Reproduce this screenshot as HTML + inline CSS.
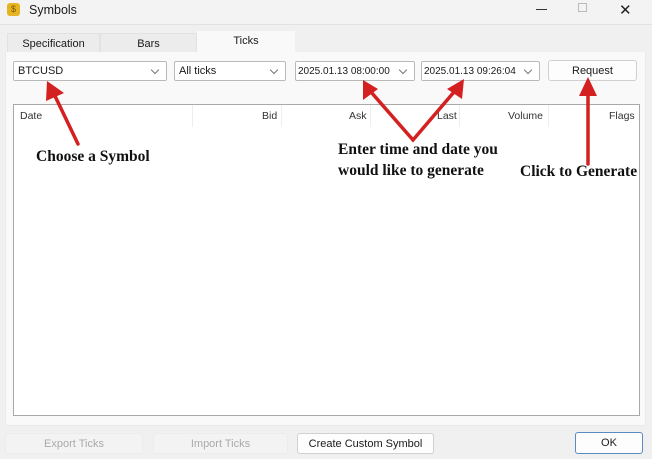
<!DOCTYPE html>
<html><head><meta charset="utf-8"><style>
*{margin:0;padding:0;box-sizing:border-box}
body{width:652px;height:459px;background:#f0f0f0;font-family:"Liberation Sans",sans-serif;font-size:11px;color:#1a1a1a;position:relative;overflow:hidden}
.a{position:absolute}
.combo{position:absolute;top:61px;height:20px;background:#fff;border:1px solid #b9b9b9;border-radius:2px;padding:3px 0 0 4px;font-size:11px}
.combo:after{content:"";position:absolute;right:8px;top:5px;width:5px;height:5px;border-right:1px solid #777;border-bottom:1px solid #777;transform:rotate(45deg)}
.dt{font-size:10px;padding:4px 0 0 2px}
.btn{position:absolute;height:21px;border:1px solid #d0d0d0;border-radius:3px;background:#fdfdfd;text-align:center;padding-top:4px;font-size:11px}
.hd{position:absolute;top:110px;font-size:10.5px;color:#333}
.sep{position:absolute;top:105px;width:1px;height:22px;background:#eee}
.note{position:absolute;font-family:"Liberation Serif",serif;font-weight:bold;font-size:15.5px;color:#111;line-height:21px}
</style></head><body>
<div class="a" style="left:0;top:0;width:652px;height:25px;background:#f3f3f3;border-bottom:1px solid #e2e2e2"></div>
<div class="a" style="left:7px;top:3px;width:13px;height:13px;background:#e6b422;border-radius:3px;color:#7a5800;font-size:9px;text-align:center;line-height:13px">$</div>
<div class="a" style="left:29px;top:3px;font-size:12.5px">Symbols</div>
<div class="a" style="left:536px;top:9px;width:11px;height:1px;background:#333"></div>
<div class="a" style="left:578px;top:3px;width:9px;height:9px;border:1px solid #bbb"></div>
<div class="a" style="left:619px;top:1px;font-size:15px;color:#222">✕</div>
<div class="a" style="left:7px;top:33px;width:93px;height:20px;background:#ececec;border:1px solid #e2e2e2;text-align:center;padding-top:4px">Specification</div>
<div class="a" style="left:100px;top:33px;width:97px;height:20px;background:#ececec;border:1px solid #e2e2e2;text-align:center;padding-top:4px">Bars</div>
<div class="a" style="left:197px;top:31px;width:98px;height:22px;background:#f9f9f9;text-align:center;padding-top:4px">Ticks</div>
<div class="a" style="left:5px;top:52px;width:641px;height:374px;background:#f9f9f9;border:1px solid #eaeaea;border-top:none"></div>
<div class="combo" style="left:13px;width:154px">BTCUSD</div>
<div class="combo" style="left:174px;width:112px">All ticks</div>
<div class="combo dt" style="left:295px;width:120px">2025.01.13 08:00:00</div>
<div class="combo dt" style="left:421px;width:119px">2025.01.13 09:26:04</div>
<div class="btn" style="left:548px;top:60px;width:89px;height:21px">Request</div>
<div class="a" style="left:13px;top:104px;width:627px;height:312px;background:#fff;border:1px solid #a9a9a9"></div>
<div class="hd" style="left:20px">Date</div>
<div class="sep" style="left:192px"></div>
<div class="hd" style="left:262px">Bid</div>
<div class="sep" style="left:281px"></div>
<div class="hd" style="left:349px">Ask</div>
<div class="sep" style="left:370px"></div>
<div class="hd" style="left:437px">Last</div>
<div class="sep" style="left:459px"></div>
<div class="hd" style="left:508px">Volume</div>
<div class="sep" style="left:548px"></div>
<div class="hd" style="left:609px">Flags</div>
<div class="btn" style="left:5px;top:433px;width:138px;color:#aaa;background:#f3f3f3;border-color:#ececec">Export Ticks</div>
<div class="btn" style="left:153px;top:433px;width:135px;color:#aaa;background:#f3f3f3;border-color:#ececec">Import Ticks</div>
<div class="btn" style="left:297px;top:433px;width:137px">Create Custom Symbol</div>
<div class="btn" style="left:575px;top:432px;width:68px;height:22px;border:1px solid #5a8cc0">OK</div>
<svg class="a" style="left:0;top:0" width="652" height="459">
<g stroke="#d42020" stroke-width="3.5" fill="none" stroke-linecap="round">
<line x1="78" y1="144" x2="55" y2="96"/>
<polyline points="371,92 413,140 454,92"/>
<line x1="588" y1="164" x2="588" y2="92"/>
</g>
<g fill="#d42020">
<polygon points="47,81 46,101 64,93"/>
<polygon points="363,80 363,100 378,89"/>
<polygon points="464,79 447,89 462,99"/>
<polygon points="588,77 579,96 597,96"/>
</g>
</svg>
<div class="note" style="left:36px;top:146px">Choose a Symbol</div>
<div class="note" style="left:338px;top:139px">Enter time and date you<br>would like to generate</div>
<div class="note" style="left:520px;top:161px">Click to Generate</div>
</body></html>
